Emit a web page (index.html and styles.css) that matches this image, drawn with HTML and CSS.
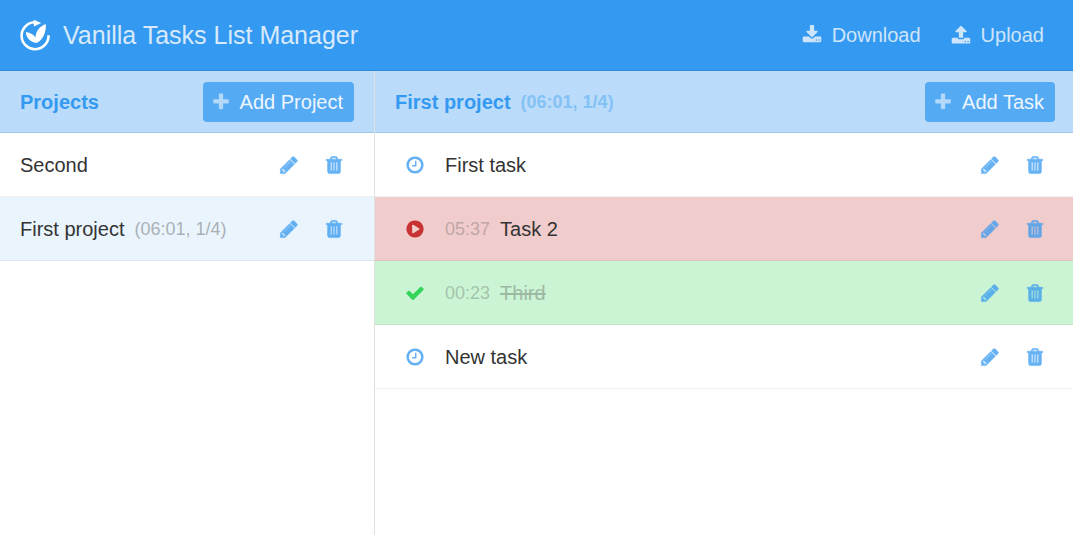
FILE: index.html
```html
<!DOCTYPE html>
<html lang="en">
<head>
<meta charset="utf-8">
<title>Vanilla Tasks List Manager</title>
<link rel="stylesheet" href="styles.css">
</head>
<body>
<svg class="sprite" aria-hidden="true">
  <symbol id="pencil" viewBox="0 0 1792 1792"><path d="M491 1536l91-91-235-235-91 91v107h128v128h107zm523-928q0-22-22-22-10 0-17 7l-542 542q-7 7-7 17 0 22 22 22 10 0 17-7l542-542q7-7 7-17zm-54-192l416 416-832 832h-416v-416zm683 96q0 53-37 90l-166 166-416-416 166-165q36-38 90-38 53 0 91 38l235 234q37 39 37 91z"/></symbol>
  <symbol id="trash" viewBox="0 0 1792 1792"><path d="M704 1376v-704q0-14-9-23t-23-9h-64q-14 0-23 9t-9 23v704q0 14 9 23t23 9h64q14 0 23-9t9-23zm256 0v-704q0-14-9-23t-23-9h-64q-14 0-23 9t-9 23v704q0 14 9 23t23 9h64q14 0 23-9t9-23zm256 0v-704q0-14-9-23t-23-9h-64q-14 0-23 9t-9 23v704q0 14 9 23t23 9h64q14 0 23-9t9-23zm-544-992h448l-48-117q-7-9-17-11h-317q-10 2-17 11zm928 32v64q0 14-9 23t-23 9h-96v948q0 83-47 143.500t-113 60.500h-832q-66 0-113-58.500t-47-141.500v-952h-96q-14 0-23-9t-9-23v-64q0-14 9-23t23-9h309l70-167q15-37 54-63t79-26h320q40 0 79 26t54 63l70 167h309q14 0 23 9t9 23z"/></symbol>
  <symbol id="clock" viewBox="0 0 1792 1792"><path d="M1024 544v448q0 14-9 23t-23 9h-320q-14 0-23-9t-9-23v-64q0-14 9-23t23-9h224v-352q0-14 9-23t23-9h64q14 0 23 9t9 23zm416 352q0-148-73-273t-198-198-273-73-273 73-198 198-73 273 73 273 198 198 273 73 273-73 198-198 73-273zm224 0q0 209-103 385.500t-279.500 279.500-385.500 103-385.500-103-279.500-279.500-103-385.500 103-385.500 279.500-279.500 385.500-103 385.500 103 279.500 279.500 103 385.500z"/></symbol>
  <symbol id="play" viewBox="0 0 1792 1792"><path d="M896 128q209 0 385.500 103t279.500 279.500 103 385.500-103 385.500-279.500 279.500-385.500 103-385.500-103-279.500-279.500-103-385.500 103-385.500 279.500-279.500 385.500-103zm384 823q32-18 32-55t-32-55l-544-320q-31-19-64-1-32 19-32 56v640q0 37 32 56 16 8 32 8 17 0 32-9z"/></symbol>
  <symbol id="check" viewBox="0 0 1792 1792"><path d="M1671 566q0 40-28 68l-724 724-136 136q-28 28-68 28t-68-28l-136-136-362-362q-28-28-28-68t28-68l136-136q28-28 68-28t68 28l294 295 656-657q28-28 68-28t68 28l136 136q28 28 28 68z"/></symbol>
  <symbol id="plus" viewBox="0 0 1792 1792"><path d="M1600 736v192q0 40-28 68t-68 28h-416v416q0 40-28 68t-68 28h-192q-40 0-68-28t-28-68v-416h-416q-40 0-68-28t-28-68v-192q0-40 28-68t68-28h416v-416q0-40 28-68t68-28h192q40 0 68 28t28 68v416h416q40 0 68 28t28 68z"/></symbol>
  <symbol id="download" viewBox="0 0 1792 1792"><path d="M1344 1344q0-26-19-45t-45-19-45 19-19 45 19 45 45 19 45-19 19-45zm256 0q0-26-19-45t-45-19-45 19-19 45 19 45 45 19 45-19 19-45zm128-224v320q0 40-28 68t-68 28h-1472q-40 0-68-28t-28-68v-320q0-40 28-68t68-28h465l135 136q58 56 136 56t136-56l136-136h464q40 0 68 28t28 68zm-325-569q17 41-14 70l-448 448q-18 19-45 19t-45-19l-448-448q-31-29-14-70 17-39 59-39h256v-448q0-26 19-45t45-19h256q26 0 45 19t19 45v448h256q42 0 59 39z"/></symbol>
  <symbol id="upload" viewBox="0 0 1792 1792"><path d="M1344 1472q0-26-19-45t-45-19-45 19-19 45 19 45 45 19 45-19 19-45zm256 0q0-26-19-45t-45-19-45 19-19 45 19 45 45 19 45-19 19-45zm128-224v320q0 40-28 68t-68 28h-1472q-40 0-68-28t-28-68v-320q0-40 28-68t68-28h427q21 56 70.500 92t110.500 36h256q61 0 110.500-36t70.500-92h427q40 0 68 28t28 68zm-325-648q-17 40-59 40h-256v448q0 26-19 45t-45 19h-256q-26 0-45-19t-19-45v-448h-256q-42 0-59-40-17-39 14-69l448-448q18-19 45-19t45 19l448 448q31 30 14 69z"/></symbol>
</svg>

<header class="topbar">
  <svg class="logo" viewBox="0 0 30 30">
    <path class="logo-ring" d="M14.500 2.200A13.500 13.500 0 1 0 28.600 15.300"/>
    <path d="M13.800-.2l7.400 3.300-7.400 3.300zM5.800 11.900c4.800.6 8.200 2.600 9.500 5.600C16 11 19.500 6.200 25.800 3.900c.6 8.200-2.800 15.900-9.300 19.100C10.500 21.800 6.300 18.100 5.800 11.900z"/>
  </svg>
  <h1 class="title">Vanilla Tasks List Manager</h1>
  <nav class="nav">
    <a class="nav-link"><svg class="icon"><use href="#download"/></svg>Download</a>
    <a class="nav-link"><svg class="icon"><use href="#upload"/></svg>Upload</a>
  </nav>
</header>

<main class="main">
  <section class="projects">
    <div class="panel-head">
      <h2 class="panel-title">Projects</h2>
      <button class="button"><svg class="icon"><use href="#plus"/></svg><span class="button-label">Add Project</span></button>
    </div>
    <ul class="list">
      <li class="row">
        <span class="name">Second</span>
        <span class="actions"><svg class="icon"><use href="#pencil"/></svg><svg class="icon"><use href="#trash"/></svg></span>
      </li>
      <li class="row row-active">
        <span class="name">First project</span><span class="info">(06:01, 1/4)</span>
        <span class="actions"><svg class="icon"><use href="#pencil"/></svg><svg class="icon"><use href="#trash"/></svg></span>
      </li>
    </ul>
  </section>

  <section class="tasks">
    <div class="panel-head">
      <h2 class="panel-title">First project<span class="panel-info">(06:01, 1/4)</span></h2>
      <button class="button"><svg class="icon"><use href="#plus"/></svg><span class="button-label">Add Task</span></button>
    </div>
    <ul class="list">
      <li class="row">
        <svg class="icon status"><use href="#clock"/></svg>
        <span class="name">First task</span>
        <span class="actions"><svg class="icon"><use href="#pencil"/></svg><svg class="icon"><use href="#trash"/></svg></span>
      </li>
      <li class="row row-running">
        <svg class="icon status"><use href="#play"/></svg>
        <span class="time">05:37</span><span class="name">Task 2</span>
        <span class="actions"><svg class="icon"><use href="#pencil"/></svg><svg class="icon"><use href="#trash"/></svg></span>
      </li>
      <li class="row row-done">
        <svg class="icon status"><use href="#check"/></svg>
        <span class="time">00:23</span><span class="name">Third</span>
        <span class="actions"><svg class="icon"><use href="#pencil"/></svg><svg class="icon"><use href="#trash"/></svg></span>
      </li>
      <li class="row">
        <svg class="icon status"><use href="#clock"/></svg>
        <span class="name">New task</span>
        <span class="actions"><svg class="icon"><use href="#pencil"/></svg><svg class="icon"><use href="#trash"/></svg></span>
      </li>
    </ul>
  </section>
</main>
</body>
</html>
```
FILE: styles.css
```css
* { box-sizing: border-box; }

body {
  margin: 0;
  height: 100vh;
  display: flex;
  flex-direction: column;
  overflow: hidden;
  background: #fff;
  color: #333;
  font: 20px/24px "Liberation Sans", Arial, sans-serif;
}

.sprite { display: none; }

.icon {
  width: 20px;
  height: 20px;
  flex: none;
  fill: currentColor;
}

.topbar {
  flex: none;
  height: 71px;
  display: flex;
  align-items: center;
  padding: 0 29px 0 20px;
  background: #3499f0;
  border-bottom: 1px solid #2e89d8;
  color: #fff;
}

.logo {
  width: 30px;
  height: 30px;
  fill: #fff;
  overflow: visible;
}

.logo-ring {
  fill: none;
  stroke: #fff;
  stroke-width: 2.6;
}

.title {
  margin: 0 0 0 13px;
  font-size: 25px;
  font-weight: normal;
  line-height: 30px;
  opacity: .8;
}

.nav {
  margin-left: auto;
  display: flex;
  gap: 30.500px;
}

.nav-link {
  display: flex;
  align-items: center;
  gap: 9.500px;
  opacity: .75;
}

.nav-link .icon { margin-bottom: 1px; }

.main {
  flex: 1;
  display: flex;
}

.projects {
  width: 375px;
  border-right: 1px solid #e0e0e0;
}

.tasks { flex: 1; }

.panel-head {
  height: 62px;
  display: flex;
  align-items: center;
  justify-content: space-between;
  padding: 0 18px 0 20px;
  background: #badcfa;
  border-bottom: 1px solid #a2c7e6;
}

.projects .panel-head { padding-right: 20px; }

.panel-title {
  display: flex;
  align-items: center;
  margin: 0;
  font-size: 20px;
  line-height: 24px;
  color: #3499f0;
}

.panel-info {
  margin-left: 10px;
  font-size: 18px;
  opacity: .4;
}

.button {
  height: 40px;
  display: flex;
  align-items: center;
  gap: 9px;
  padding: 0 11px 0 8px;
  border: 0;
  border-radius: 4px;
  background: #55aaf4;
  color: #fff;
  font: inherit;
}

.button .icon {
  margin-top: 1px;
  opacity: .55;
}

.button-label { opacity: .9; }

.list {
  margin: 0;
  padding: 0;
  list-style: none;
}

.row {
  height: 64px;
  display: flex;
  align-items: center;
  padding: 0 28px 0 20px;
  border-bottom: 1px solid rgba(0, 0, 0, .06);
}

.projects .row { padding-right: 30px; }
.tasks .row { padding-left: 30px; }

.row .icon { margin-top: 1px; }

.row-active { background: #eaf4fd; }
.row-running { background: #f0cccc; }
.row-done { background: #cbf4d5; }

.status {
  margin-right: 20px;
  color: #64b0f4;
}

.row-running .status { color: #c83232; }
.row-done .status { color: #32d45a; }

.info {
  margin-left: 10px;
  font-size: 18px;
  opacity: .35;
}

.time {
  margin-right: 10px;
  font-size: 18px;
  opacity: .25;
}

.row-done .name {
  text-decoration: line-through;
  opacity: .3;
}

.actions {
  margin-left: auto;
  display: flex;
  gap: 25px;
  color: #3499f0;
  opacity: .75;
}

.actions .icon {
  stroke: currentColor;
  stroke-width: 50;
}
```
